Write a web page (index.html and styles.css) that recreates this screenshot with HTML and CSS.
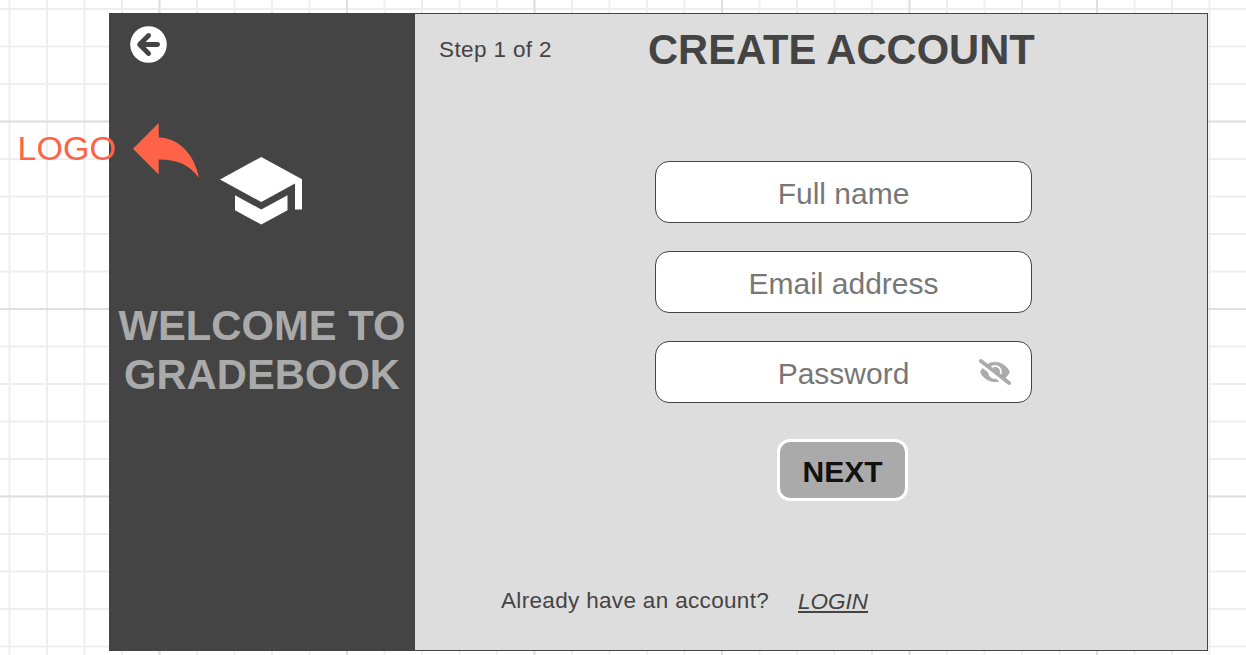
FILE: index.html
```html
<!DOCTYPE html>
<html lang="en">
<head>
<meta charset="utf-8">
<title>Create account</title>
<link rel="stylesheet" href="styles.css">
</head>
<body>
<svg class="grid" width="1246" height="655" aria-hidden="true">
  <defs>
    <pattern id="minor" x="9.5" y="9" width="37.5" height="37.5" patternUnits="userSpaceOnUse">
      <path d="M0 0H37.5M0 37.5H37.5M0 0V37.5M37.5 0V37.5" stroke="#eeeeee" stroke-width="2"/>
    </pattern>
    <pattern id="major" x="159.5" y="121.5" width="187.5" height="187.5" patternUnits="userSpaceOnUse">
      <path d="M0 0H187.5M0 187.5H187.5M0 0V187.5M187.5 0V187.5" stroke="#dfdfdf" stroke-width="2"/>
    </pattern>
  </defs>
  <rect width="1246" height="655" fill="url(#minor)"/>
  <rect width="1246" height="655" fill="url(#major)"/>
</svg>
<main class="frame">
  <aside class="sidebar">
    <svg class="back" viewBox="0 0 38 38">
      <circle cx="18.500" cy="18.500" r="18.300" fill="#fff"/>
      <path d="M18.600 9.500L9.600 18.500L18.600 27.500M10.500 18.500H27.600" fill="none" stroke="#444" stroke-width="4.800" stroke-linecap="round" stroke-linejoin="round"/>
    </svg>
    <svg class="cap" viewBox="1 3 22 18" preserveAspectRatio="none">
      <path d="M5 13.18v4L12 21l7-3.82v-4L12 17l-7-3.82zM12 3L1 9l11 6 9-4.91V17h2V9L12 3z" fill="#fff"/>
    </svg>
    <h2 class="welcome">WELCOME TO<br>GRADEBOOK</h2>
  </aside>
  <section class="content">
    <header class="header">
      <span class="step">Step 1 of 2</span>
      <h1 class="title">CREATE ACCOUNT</h1>
    </header>
    <form class="form">
      <div class="field">Full name</div>
      <div class="field">Email address</div>
      <div class="field">Password
        <svg class="eye" viewBox="0 0 640 512" preserveAspectRatio="none">
          <path fill="#aaa" stroke="#aaa" stroke-width="14" d="M320 400c-75.850 0-137.250-58.710-142.900-133.110L72.200 185.820c-13.790 17.300-26.480 35.590-36.720 55.590a32.350 32.350 0 0 0 0 29.190C89.710 376.410 197.070 448 320 448c26.910 0 52.870-4 77.890-10.460L346 397.390a144.130 144.130 0 0 1-26 2.610zm313.820 58.100l-110.550-85.440a331.250 331.250 0 0 0 81.250-102.070 32.350 32.350 0 0 0 0-29.190C550.290 135.590 442.930 64 320 64a308.150 308.150 0 0 0-147.320 37.700L45.460 3.370A16 16 0 0 0 23 6.180L3.370 31.450A16 16 0 0 0 6.180 53.900l588.360 454.730a16 16 0 0 0 22.460-2.810l19.640-25.270a16 16 0 0 0-2.820-22.450zm-183.720-142l-39.300-30.380A94.750 94.750 0 0 0 416 256a94.760 94.760 0 0 0-121.310-92.210A47.650 47.650 0 0 1 304 192a46.640 46.640 0 0 1-1.540 10l-73.610-56.890A142.310 142.310 0 0 1 320 112a143.920 143.920 0 0 1 144 144c0 21.630-5.290 41.790-13.900 60.110z"/>
        </svg>
      </div>
      <button class="next" type="button">NEXT</button>
    </form>
    <footer class="footer">
      <span class="question">Already have an account?</span>
      <a class="login">LOGIN</a>
    </footer>
  </section>
</main>
<div class="note">LOGO</div>
<svg class="note-arrow" viewBox="0 0 66 55">
  <path d="M0 25.7L25.7 0V14.600C45 15 61 30 66 55C56 41 43 36.500 25.700 36.600V51.500Z" fill="#ff6347"/>
</svg>
</body>
</html>
```
FILE: styles.css
```css
* { box-sizing: border-box; }
body {
  margin: 0;
  height: 655px;
  overflow: hidden;
  position: relative;
  background: #fff;
  color: #444;
  font-family: "Liberation Sans", Arial, sans-serif;
  padding: 13px 0 0 109px;
}
.grid { position: absolute; left: 0; top: 0; }
.frame {
  position: relative;
  display: flex;
  width: 1099px;
  height: 638px;
  border: 1px solid #444;
  background: #ddd;
}
.sidebar {
  display: flex;
  flex-direction: column;
  align-items: center;
  width: 305px;
  background: #444;
  padding-top: 12px;
}
.back { width: 38px; height: 38px; align-self: flex-start; margin-left: 20px; }
.cap { width: 82.5px; height: 67.5px; margin: 93px 0 0 -3.5px; }
.welcome {
  margin: 76px 0 0 -1px;
  color: #aaa;
  font-size: 41.7px;
  line-height: 49px;
  text-align: center;
  letter-spacing: 0.05px;
  white-space: nowrap;
}
.content { display: flex; flex-direction: column; flex: 1; }
.header { display: flex; align-items: center; height: 73px; padding-left: 24px; }
.step { width: 209px; margin-top: -2px; font-size: 22.5px; letter-spacing: 0.375px; }
.title { margin: -2px 0 0; font-size: 41.7px; white-space: nowrap; }
.form {
  display: flex;
  flex-direction: column;
  align-items: center;
  gap: 28px;
  width: 377px;
  margin: 74px 0 0 240px;
}
.field {
  position: relative;
  display: flex;
  align-items: center;
  justify-content: center;
  width: 377px;
  height: 62px;
  padding-top: 3px;
  border: 1px solid #444;
  border-radius: 14px;
  background: #fff;
  color: #777;
  font-size: 30px;
}
.eye { position: absolute; right: 20px; top: 17px; width: 32px; height: 26px; }
.next {
  width: 131px;
  height: 62px;
  margin: 8px 0 0 -2px;
  padding: 4px 0 0;
  border: 3px solid #fff;
  border-radius: 13px;
  background: #aaa;
  color: #111;
  font: bold 30px "Liberation Sans", Arial, sans-serif;
}
.footer {
  display: flex;
  align-items: flex-start;
  margin: auto 0 35px 86px;
  font-size: 22.5px;
}
.question { width: 297px; margin-top: -1px; letter-spacing: 0.33px; }
.login { font-style: italic; text-decoration: underline; }
.note { position: absolute; left: 17.5px; top: 129px; color: #ff6347; font-size: 34px; letter-spacing: 0.1px; }
.note-arrow { position: absolute; left: 133px; top: 123px; width: 66px; height: 55px; }
```
